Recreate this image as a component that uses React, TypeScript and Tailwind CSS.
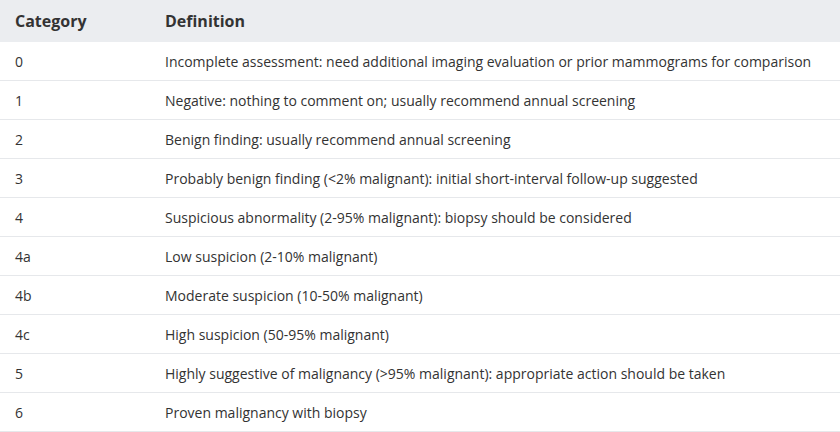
const rows: [string, string][] = [
  ["0", "Incomplete assessment: need additional imaging evaluation or prior mammograms for comparison"],
  ["1", "Negative: nothing to comment on; usually recommend annual screening"],
  ["2", "Benign finding: usually recommend annual screening"],
  ["3", "Probably benign finding (<2% malignant): initial short-interval follow-up suggested"],
  ["4", "Suspicious abnormality (2-95% malignant): biopsy should be considered"],
  ["4a", "Low suspicion (2-10% malignant)"],
  ["4b", "Moderate suspicion (10-50% malignant)"],
  ["4c", "High suspicion (50-95% malignant)"],
  ["5", "Highly suggestive of malignancy (>95% malignant): appropriate action should be taken"],
  ["6", "Proven malignancy with biopsy"],
];

export default function App() {
  return (
    <div className="w-[840px] h-[432px] bg-white text-[#333333]" style={{ fontFamily: '"Open Sans", sans-serif' }}>
      <div className="flex h-[42px] items-center bg-[#ebedf0] text-[16px] font-bold">
        <div className="w-[150px] pl-[15px]">Category</div>
        <div className="pl-[15px]">Definition</div>
      </div>
      {rows.map(([c, d]) => (
        <div key={c} className="flex h-[39px] items-center border-b border-[#e6e8eb] text-[14px]">
          <div className="w-[150px] pl-[15px]">{c}</div>
          <div className="pl-[15px]">{d}</div>
        </div>
      ))}
    </div>
  );
}
